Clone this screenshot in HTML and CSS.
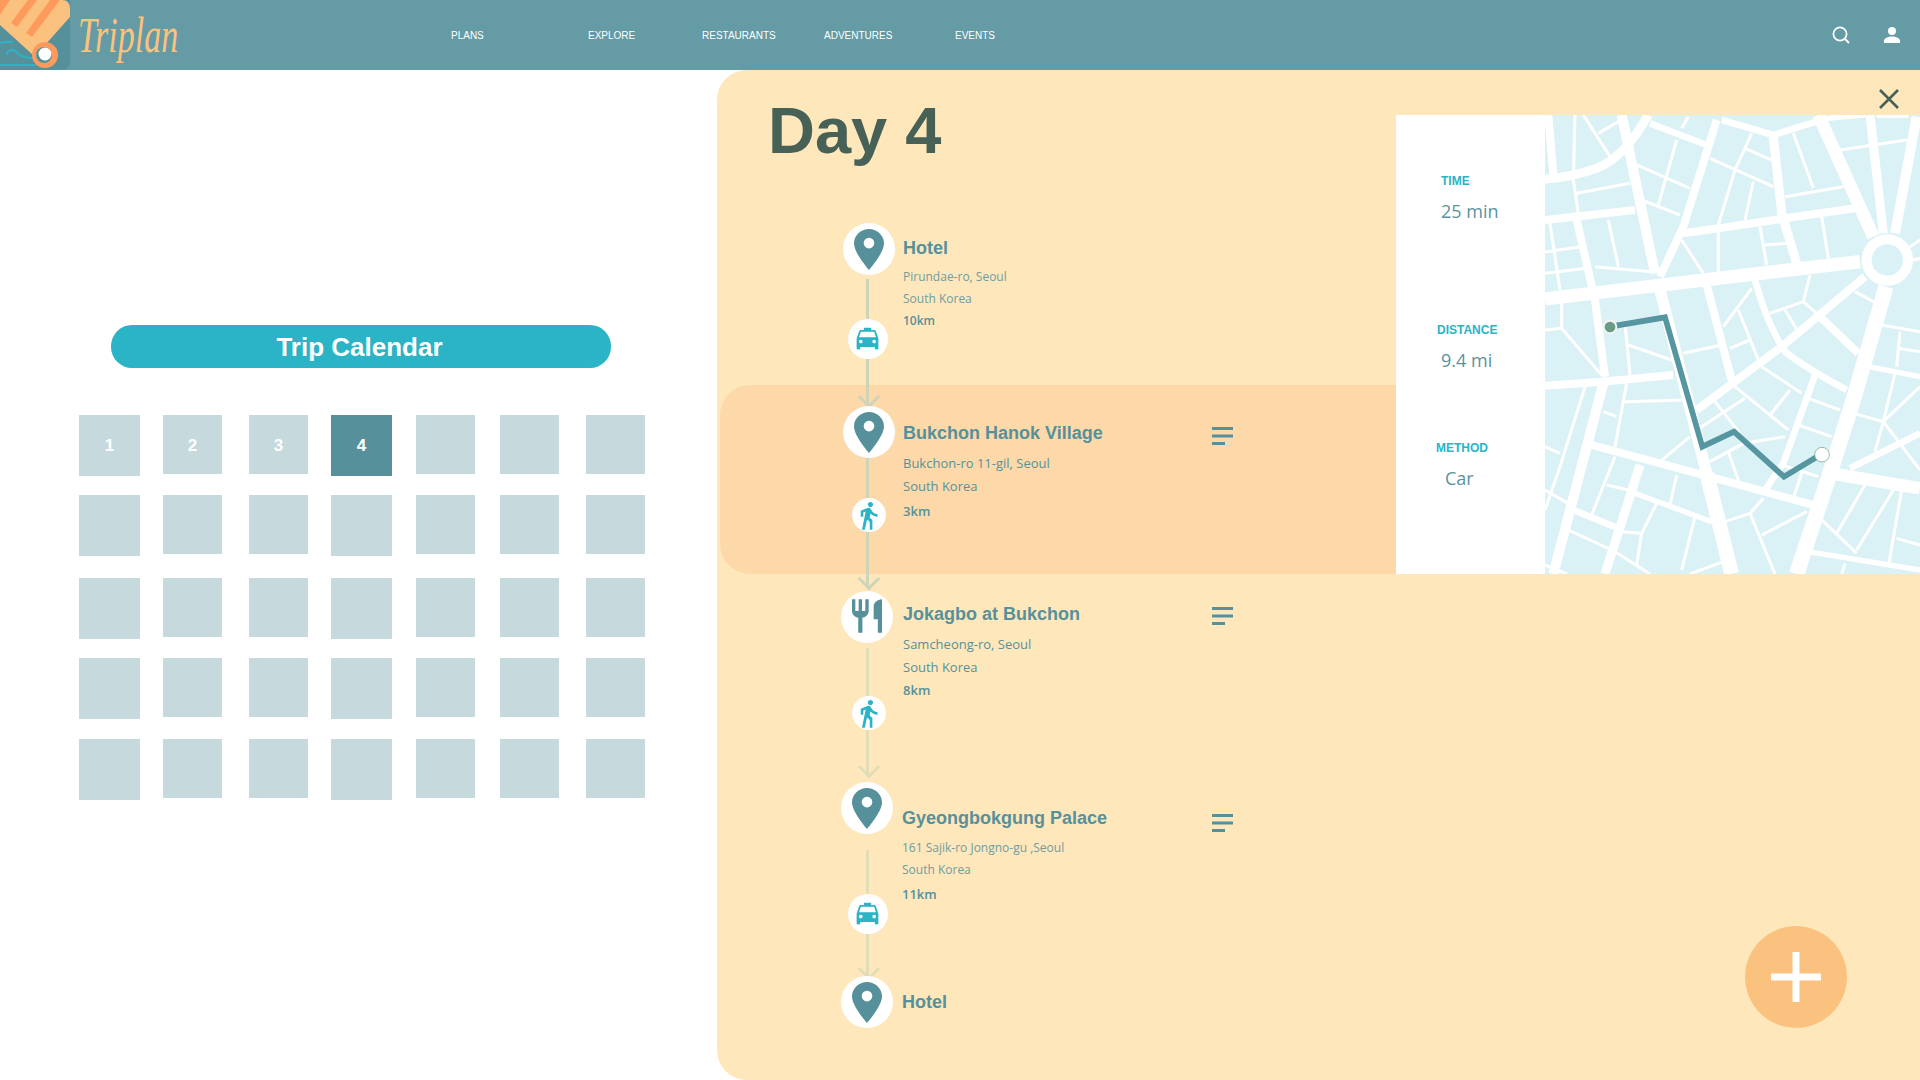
FILE: index.html
```html
<!DOCTYPE html>
<html lang="en">
<head>
    <meta charset="UTF-8">
    <meta name="viewport" content="width=device-width, initial-scale=1.0">
    <title>Triplan</title>
    <link rel="stylesheet" href="styles.css">
</head>
<body>
<!-- Top bar -->
<header class="topbar">
    <svg class="logo" viewBox="0 0 70 70">
        <path d="M0 0H70V62a8 8 0 0 1-8 8H0Z" fill="#56919b"/>
        <g fill="none" stroke="#2bb3c6" stroke-width="2">
            <path d="M0 43Q6 41 13 42"/>
            <path d="M7 55Q7 50 12 50Q16 50 18 54Q24 58 33 58"/>
            <path d="M0 65H36"/>
        </g>
        <path d="M0 0H62Q70 0 70 9V17L45 45L33 55L0 25Z" fill="#fbc27f"/>
        <path d="M0 0H10L0 15ZM28 0H37L17 27L11 23ZM50 0H60L32 37L26 33Z" fill="#fd9a5c"/>
        <circle cx="45" cy="55" r="13" fill="#fd9a5c"/>
        <circle cx="44" cy="55" r="8" fill="#56919b"/>
        <circle cx="45" cy="54" r="6.5" fill="#fff"/>
    </svg>
    <div class="brand"><span>Triplan</span></div>
    <nav class="nav">
        <a>Plans</a>
        <a>Explore</a>
        <a>Restaurants</a>
        <a>Adventures</a>
        <a>Events</a>
    </nav>
    <div class="topbar-icons">
        <svg class="icon-search" viewBox="0 0 20 20" fill="none" stroke="#fff">
            <circle cx="9" cy="9" r="6.6" stroke-width="1.7"/>
            <path d="M14 14L18 18" stroke-width="2"/>
        </svg>
        <svg class="icon-user" viewBox="0 0 18 18" fill="#fff">
            <circle cx="9" cy="5" r="4"/>
            <path d="M1 17V15C1 12 5 10.500 9 10.500S17 12 17 15V17Z"/>
        </svg>
    </div>
</header>

<main class="page">
    <!-- Calendar -->
    <section class="calendar">
        <h2 class="calendar-title">Trip Calendar</h2>
        <div class="calendar-grid">
            <div class="day wide">1</div><div class="day">2</div><div class="day">3</div><div class="day wide active">4</div><div class="day"></div><div class="day"></div><div class="day"></div>
            <div class="day wide"></div><div class="day"></div><div class="day"></div><div class="day wide"></div><div class="day"></div><div class="day"></div><div class="day"></div>
            <div class="day wide"></div><div class="day"></div><div class="day"></div><div class="day wide"></div><div class="day"></div><div class="day"></div><div class="day"></div>
            <div class="day wide"></div><div class="day"></div><div class="day"></div><div class="day wide"></div><div class="day"></div><div class="day"></div><div class="day"></div>
            <div class="day wide"></div><div class="day"></div><div class="day"></div><div class="day wide"></div><div class="day"></div><div class="day"></div><div class="day"></div>
        </div>
    </section>

    <!-- Day panel -->
    <section class="panel">
        <div class="route">
            <h1 class="day-title">Day 4</h1>

            <div class="stop stop-1">
                <div class="rail">
                    <div class="node"><svg class="pin"><use href="#pin"/></svg></div>
                    <div class="seg"></div>
                    <div class="hop"><svg class="taxi"><use href="#taxi"/></svg></div>
                    <div class="seg tail"></div>
                </div>
                <div class="info">
                    <div class="place">Hotel</div>
                    <div class="addr">Pirundae-ro, Seoul</div>
                    <div class="addr">South Korea</div>
                    <div class="dist">10km</div>
                </div>
            </div>

            <div class="stop stop-2">
                <div class="rail">
                    <div class="node"><svg class="pin"><use href="#pin"/></svg></div>
                    <div class="seg"></div>
                    <div class="hop walk"><svg class="walker"><use href="#walker"/></svg></div>
                    <div class="seg tail"></div>
                </div>
                <div class="info">
                    <div class="place">Bukchon Hanok Village</div>
                    <div class="addr">Bukchon-ro 11-gil, Seoul</div>
                    <div class="addr">South Korea</div>
                    <div class="dist">3km</div>
                </div>
                <svg class="menu"><use href="#menu"/></svg>
            </div>

            <div class="stop stop-3">
                <div class="rail">
                    <div class="node"><svg class="fork" viewBox="0 0 24 24"><path d="M11 9H9V2H7v7H5V2H3v7c0 2.120 1.660 3.840 3.750 3.970V22h2.500v-9.030C11.340 12.840 13 11.120 13 9V2h-2v7zm5-3v8h2.500v8H21V2c-2.760 0-5 2.240-5 4z"/></svg></div>
                    <div class="seg"></div>
                    <div class="hop walk"><svg class="walker"><use href="#walker"/></svg></div>
                    <div class="seg tail"></div>
                </div>
                <div class="info">
                    <div class="place">Jokagbo at Bukchon</div>
                    <div class="addr">Samcheong-ro, Seoul</div>
                    <div class="addr">South Korea</div>
                    <div class="dist">8km</div>
                </div>
                <svg class="menu"><use href="#menu"/></svg>
            </div>

            <div class="stop stop-4">
                <div class="rail">
                    <div class="node"><svg class="pin"><use href="#pin"/></svg></div>
                    <div class="seg"></div>
                    <div class="hop"><svg class="taxi"><use href="#taxi"/></svg></div>
                    <div class="seg tail"></div>
                </div>
                <div class="info">
                    <div class="place">Gyeongbokgung Palace</div>
                    <div class="addr">161 Sajik-ro Jongno-gu ,Seoul</div>
                    <div class="addr">South Korea</div>
                    <div class="dist">11km</div>
                </div>
                <svg class="menu"><use href="#menu"/></svg>
            </div>

            <div class="stop stop-5">
                <div class="rail">
                    <div class="node"><svg class="pin"><use href="#pin"/></svg></div>
                </div>
                <div class="info">
                    <div class="place">Hotel</div>
                </div>
            </div>
        </div>

        <div class="detail">
            <div class="facts">
                <div class="fact fact-time">
                    <div class="fact-label">TIME</div>
                    <div class="fact-value">25 min</div>
                </div>
                <div class="fact fact-distance">
                    <div class="fact-label">DISTANCE</div>
                    <div class="fact-value">9.4 mi</div>
                </div>
                <div class="fact fact-method">
                    <div class="fact-label">METHOD</div>
                    <div class="fact-value">Car</div>
                </div>
            </div>
            <svg class="map" viewBox="15 45 1125 1377" preserveAspectRatio="none">
                <rect x="15" y="45" width="1125" height="1377" fill="#daf1f6"/>
                <g fill="none" stroke="#fff" stroke-linejoin="bevel">
                    <!-- big roads -->
                    <path stroke-width="40" d="M15 597L340 558L960 485"/>
                    <path stroke-width="44" d="M500 1120L575 1422"/>
                    <path stroke-width="34" d="M360 570L500 1120"/>
                    <path stroke-width="46" d="M1038 560L940 900L860 1150L770 1422"/>
                    <path stroke-width="38" d="M1000 410L835 45M870 1120L1140 1165"/>
                    <path stroke-width="30" d="M245 45L345 520M1065 400L1130 50M190 850L40 1422"/>
                    <path stroke-width="27" d="M15 238Q100 230 170 205Q250 175 325 45M1030 400L990 45M700 110L725 340L770 490M300 1095L195 1422"/>
                    <!-- mid roads -->
                    <path stroke-width="24" d="M15 857L185 845L400 825M360 530L430 380L530 60M975 530L725 740L470 930M155 1035L490 1125L820 1215M110 360L165 600L195 830M25 45L40 225M15 360L285 330M430 400L535 385L735 355L945 325M840 650L955 760M500 555L575 840"/>
                    <path stroke-width="20" d="M330 70L500 135M545 60L700 105L860 55M645 540Q680 670 735 755Q790 800 920 870M825 825L730 1090L675 1170M930 1105L1140 1000M100 1230L235 1285"/>
                    <path stroke-width="16" d="M985 800L1140 830M860 55L975 45M1010 45L1105 45M805 1355L1140 1410M285 1180L515 1265"/>
                    <!-- small roads -->
                    <path stroke-width="9" d="M105 45L100 240L115 340M130 45L210 170M175 100L235 65M110 280L270 250M280 190L450 265M410 120L355 315M305 300L420 345M425 85L445 50M510 175L700 260M635 100L585 210L535 375M615 145L695 180M640 245L615 360M760 100L820 265M735 290L910 260M900 150L1100 120M30 370L60 570M15 455L125 440M15 520L140 505M65 610L65 685L185 825M15 690L65 685M205 360L235 500M165 500L335 515M255 670L270 825M265 735L395 780M660 380L680 495M535 395L535 515M425 420L490 520M675 435L745 430M845 350L865 475M635 565L550 680M595 630L655 780M430 760L545 735M570 745L630 720M260 850L225 1040M190 935L230 950M255 905L430 900M135 860L60 1100L15 1230M15 1040L60 1060M665 800L785 880M585 860L745 990M750 870L690 945M525 905L600 1000M470 990L615 895M450 1010L360 1085M510 1085L610 1030L735 1010M565 1055L600 1155M805 895L900 930M775 975L875 1010M725 1095L835 1130M785 1120L760 1195M810 525L790 605L690 640M790 605L835 645M735 630L775 695M940 940L1030 965M1065 820L1030 965L1005 1055M1030 965L1140 860M1030 965L1140 1110M1025 675L1140 695M1080 695L1070 800M1075 745L1140 755M945 575L1000 605M975 1155L890 1300M1060 1170L950 1350M1085 1170L1045 1400M835 1250L950 1360M1070 1315L1140 1335M225 1070L155 1245M200 1155L265 1170M410 1125L390 1215M350 1210L305 1300L290 1395M85 1290L215 1350M245 1295L305 1300M225 1355L330 1422M465 1250L425 1410M450 1422L550 1385M555 1265L630 1240L705 1422M630 1240L670 1195M665 1305L800 1235M15 1170L85 1210M15 1395L80 1422M915 1390L905 1422M1110 440L1140 420M1120 480L1140 475"/>
                </g>
                <circle cx="1042" cy="480" r="62" fill="#daf1f6" stroke="#fff" stroke-width="30"/>
                <path d="M210 680L375 652L487 1040L582 995L732 1130L845 1062" fill="none" stroke="#5596a0" stroke-width="17"/>
                <circle cx="210" cy="681" r="19" fill="#6b9a85" stroke="#f0f5f3" stroke-width="6"/>
                <circle cx="846" cy="1064" r="22" fill="#fff" stroke="#6b9a85" stroke-width="2"/>
            </svg>
        </div>

        <svg class="close" viewBox="0 0 20 20" stroke="#486156" stroke-width="2.600"><path d="M1 1L19 19M19 1L1 19"/></svg>
        <button class="add"><svg viewBox="0 0 50 50" fill="#fff"><path d="M21.500 0h7v21.500H50v7H28.500V50h-7V28.500H0v-7h21.500z"/></svg></button>
    </section>
</main>

<!-- icon sprites -->
<svg class="sprites">
    <symbol id="pin" viewBox="0 0 30 41">
        <path fill-rule="evenodd" d="M15 0C6.700 0 0 6.500 0 14.500C0 24 15 41 15 41C15 41 30 24 30 14.500C30 6.500 23.300 0 15 0ZM15 8.800A5.300 5.300 0 1 1 15 19.400A5.300 5.300 0 1 1 15 8.800Z"/>
    </symbol>
    <symbol id="taxi" viewBox="0 0 24 24">
        <path d="M18.920 6.010C18.720 5.420 18.160 5 17.500 5H15V3H9v2H6.500c-.66 0-1.210.42-1.420 1.010L3 12v8c0 .55.45 1 1 1h1c.55 0 1-.45 1-1v-1h12v1c0 .55.45 1 1 1h1c.55 0 1-.45 1-1v-8l-2.080-5.990zM6.500 16c-.83 0-1.500-.67-1.500-1.500S5.670 13 6.500 13s1.500.67 1.500 1.500S7.330 16 6.500 16zm11 0c-.83 0-1.500-.67-1.500-1.500s.67-1.500 1.500-1.500 1.500.67 1.500 1.500-.67 1.500-1.500 1.500zM5 11l1.500-4.500h11L19 11H5z"/>
    </symbol>
    <symbol id="walker" viewBox="0 0 24 24">
        <path d="M13.500 5.500c1.100 0 2-.9 2-2s-.9-2-2-2-2 .9-2 2 .9 2 2 2zM9.800 8.900L7 23h2.100l1.800-8 2.100 2v6h2v-7.500l-2.100-2 .6-3C14.800 12 16.800 13 19 13v-2c-1.900 0-3.500-1-4.300-2.400l-1-1.600c-.4-.6-1-1-1.700-1-.3 0-.5.1-.8.1L6 8.300V13h2V9.600l1.800-.7"/>
    </symbol>
    <symbol id="menu" viewBox="0 0 21 18">
        <path d="M0 0H21V3H0ZM0 7.500H21V10.500H0ZM0 15H13V18H0Z"/>
    </symbol>
</svg>
</body>
</html>
```

FILE: styles.css
```css
* {
    box-sizing: border-box;
}

html, body {
    margin: 0;
    padding: 0;
    height: 1080px;
    overflow: hidden;
}

body {
    background: #fff;
    font-family: "Liberation Sans", Arial, sans-serif;
    color: #56919b;
}

.sprites {
    display: none;
}

/* Top bar */
.topbar {
    display: flex;
    align-items: center;
    height: 70px;
    background-color: #649ba5;
}

.logo {
    display: block;
    width: 70px;
    height: 70px;
    flex: none;
}

.brand {
    width: 373px;
    margin-left: 8px;
    flex: none;
    font-family: "Liberation Serif", serif;
    font-style: italic;
    font-size: 50px;
    color: #fbc27f;
}

.brand span {
    display: inline-block;
    transform: scaleX(0.68);
    transform-origin: left center;
}

.nav {
    display: grid;
    grid-template-columns: 137px 114px 122px 131px auto;
}

.nav a {
    font-size: 10px;
    text-transform: uppercase;
    color: #fff;
}

.topbar-icons {
    display: flex;
    align-items: center;
    margin-left: auto;
    padding-right: 19px;
}

.icon-search {
    width: 20px;
    height: 20px;
    margin-right: 32px;
}

.icon-user {
    width: 18px;
    height: 18px;
}

.page {
    display: flex;
    height: 1010px;
}

/* Calendar */
.calendar {
    width: 717px;
    flex: none;
    padding-top: 255px;
}

.calendar-title {
    width: 500px;
    height: 43px;
    margin: 0 0 47px 111px;
    padding: 1px 3px 0 0;
    border-radius: 21px;
    background-color: #2bb3c6;
    color: #fff;
    font-size: 26px;
    font-weight: bold;
    line-height: 43px;
    text-align: center;
}

.calendar-grid {
    display: grid;
    grid-template-columns: 84px 86px 82px 85px 84px 86px 59px;
    grid-template-rows: 80px 83px 80px 81px 61px;
    margin-left: 79px;
}

.day {
    display: flex;
    align-items: center;
    justify-content: center;
    width: 59px;
    height: 59px;
    padding-top: 2px;
    background-color: #c6dadd;
    color: #fff;
    font-size: 17px;
    font-weight: bold;
}

.day.wide {
    width: 61px;
    height: 61px;
    padding-top: 0;
}

.day.active {
    background-color: #56919b;
}

/* Day panel */
.panel {
    position: relative;
    display: flex;
    flex: 1;
    border-radius: 30px 0 0 30px;
    background-color: #fee7bb;
}

.route {
    width: 679px;
    flex: none;
}

.day-title {
    height: 122px;
    margin: 0 0 31px 51px;
    color: #486156;
    font-size: 65px;
    font-weight: bold;
    line-height: 122px;
}

.stop {
    display: flex;
    align-items: flex-start;
    margin-left: 3px;
    padding-left: 121px;
}

.rail {
    position: relative;
    z-index: 1;
    display: flex;
    flex-direction: column;
    align-items: flex-start;
    width: 62px;
    flex: none;
}

.node {
    display: flex;
    align-items: center;
    justify-content: center;
    width: 52px;
    height: 52px;
    border-radius: 50%;
    background-color: #fff;
}

.pin {
    width: 30px;
    height: 41px;
    fill: #56919b;
}

.fork {
    width: 40px;
    height: 40px;
    margin: 0 1px 2px 0;
    fill: #56919b;
}

.seg {
    position: relative;
    width: 3px;
    margin-left: 25px;
    background-color: #d0d4b6;
}

.tail::after {
    content: "";
    position: absolute;
    left: -5px;
    bottom: 1px;
    width: 13px;
    height: 13px;
    border-right: 3px solid #d0d4b6;
    border-bottom: 3px solid #d0d4b6;
    transform: rotate(45deg);
}

.hop {
    display: flex;
    align-items: center;
    justify-content: center;
    width: 40px;
    height: 40px;
    margin-left: 7px;
    border-radius: 50%;
    background-color: #fff;
}

.hop.walk {
    width: 34px;
    height: 34px;
    margin-left: 11px;
}

.taxi {
    width: 29px;
    height: 29px;
    margin: 0 1px 1px 0;
    flex: none;
    fill: #2bb3c6;
}

.walker {
    width: 31px;
    height: 31px;
    margin-right: 2px;
    flex: none;
    fill: #2bb3c6;
}

.info {
    width: 309px;
    flex: none;
}

.place {
    font-size: 18px;
    font-weight: bold;
    line-height: 22px;
}

.addr {
    font-family: "Open Sans", sans-serif;
    font-size: 13px;
    line-height: 23px;
}

.dist {
    font-family: "Open Sans", sans-serif;
    font-size: 13px;
    font-weight: 600;
    line-height: 22px;
}

.menu {
    width: 21px;
    height: 18px;
    fill: #56919b;
}

/* each stop has its own spacing in the design */
.stop-1 {
    height: 162px;
}

.stop-1 .node,
.stop-2 .node {
    margin-left: 2px;
}

.stop-1 .rail .seg {
    height: 40px;
    margin-top: 4px;
}

.stop-1 .rail .tail {
    height: 47px;
    margin-top: 0;
}

.stop-1 .info {
    margin-top: 14px;
}

.stop-1 .addr,
.stop-4 .addr {
    font-size: 12px;
    line-height: 22px;
    opacity: 0.85;
}

.stop-1 .place + .addr {
    margin-top: 7px;
}

.stop-1 .dist {
    font-size: 12px;
}

.stop-2 {
    height: 189px;
    padding-top: 21px;
    border-radius: 30px 0 0 30px;
    background-color: #fdd9aa;
}

.stop-2 .seg {
    height: 40px;
}

.stop-2 .tail {
    height: 56px;
}

.stop-2 .info {
    margin-top: 16px;
}

.stop-2 .place + .addr {
    margin-top: 8px;
}

.stop-2 .dist {
    margin-top: 2px;
}

.stop-2 .menu {
    margin-top: 21px;
}

.stop-3 {
    height: 208px;
    padding-top: 17px;
}

.stop-3 .seg,
.stop-4 .seg {
    background-color: #e2ddb9;
}

.stop-3 .tail::after,
.stop-4 .tail::after {
    border-color: #e2ddb9;
}

.stop-3 .rail .seg {
    height: 48px;
    margin-top: 5px;
}

.stop-3 .rail .tail {
    height: 46px;
    margin-top: 0;
}

.stop-3 .info {
    margin-top: 12px;
}

.stop-3 .place + .addr {
    margin-top: 8px;
}

.stop-3 .menu {
    margin-top: 16px;
}

.stop-4 {
    height: 194px;
}

.stop-4 .rail .seg {
    height: 44px;
    margin-top: 16px;
}

.stop-4 .rail .tail {
    margin-top: 0;
}

.stop-4 .info {
    margin-top: 25px;
    margin-left: -1px;
}

.stop-4 .place + .addr {
    margin-top: 8px;
}

.stop-4 .dist {
    margin-top: 2px;
}

.stop-4 .menu {
    margin-top: 32px;
    margin-left: 1px;
}

.stop-5 .info {
    margin-top: 15px;
    margin-left: -1px;
}

/* Route detail */
.detail {
    display: flex;
    width: 524px;
    height: 459px;
    margin-top: 45px;
    flex: none;
    background-color: #fff;
}

.facts {
    width: 149px;
    flex: none;
    padding-top: 58px;
    padding-left: 40px;
}

.fact-label {
    color: #2bb3c6;
    font-size: 12px;
    font-weight: bold;
    line-height: 16px;
}

.fact-value {
    margin-top: 10px;
    color: #5b939c;
    font-family: "Open Sans", sans-serif;
    font-size: 18px;
    line-height: 24px;
}

.fact-time .fact-label,
.fact-time .fact-value {
    margin-left: 5px;
}

.fact-distance {
    margin-top: 99px;
}

.fact-distance .fact-label {
    margin-left: 1px;
}

.fact-distance .fact-value {
    margin-left: 5px;
}

.fact-method {
    margin-top: 68px;
}

.fact-method .fact-value {
    margin-left: 9px;
}

.map {
    display: block;
    width: 375px;
    height: 459px;
    flex: none;
}

/* Overlays on the panel */
.close {
    position: absolute;
    top: 19px;
    right: 21px;
    width: 20px;
    height: 20px;
}

.add {
    position: absolute;
    right: 73px;
    bottom: 52px;
    display: flex;
    align-items: center;
    justify-content: center;
    width: 102px;
    height: 102px;
    padding: 0;
    border: none;
    border-radius: 50%;
    background-color: #fbc27f;
}

.add svg {
    width: 50px;
    height: 50px;
}
```
